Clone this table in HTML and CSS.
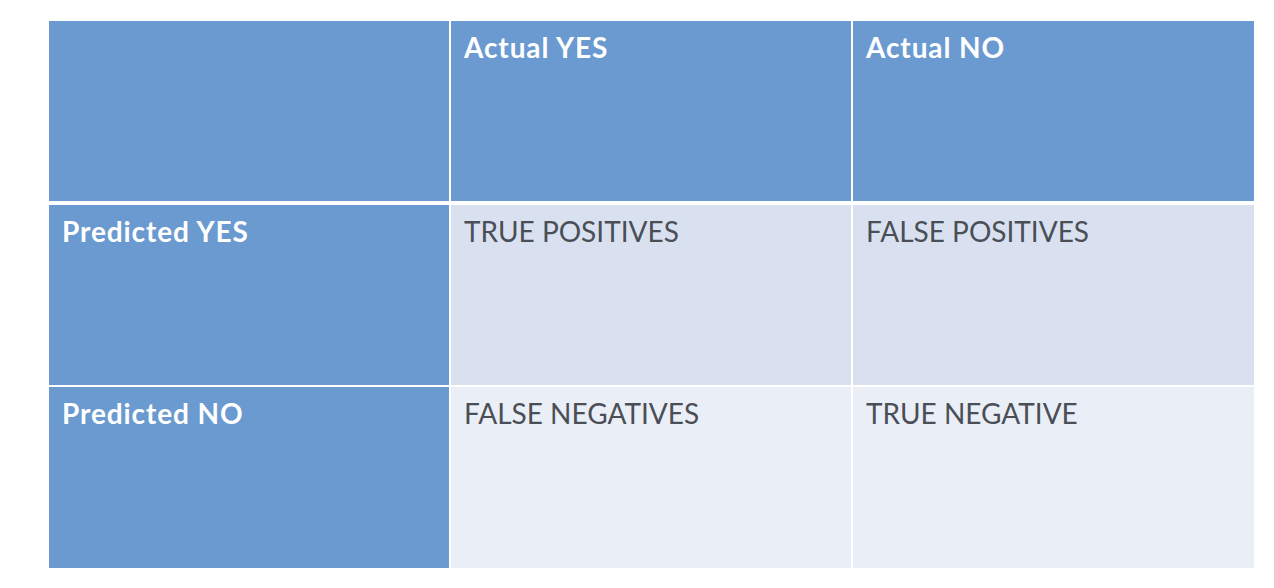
FILE: index.html
```html
<!DOCTYPE html>
<html>
<head>
<meta charset="utf-8">
<link rel="stylesheet" href="styles.css">
</head>
<body>
<div class="matrix">
  <div class="cell head"></div>
  <div class="cell head">Actual YES</div>
  <div class="cell head">Actual NO</div>
  <div class="cell side">Predicted YES</div>
  <div class="cell odd">TRUE POSITIVES</div>
  <div class="cell odd">FALSE POSITIVES</div>
  <div class="cell side">Predicted NO</div>
  <div class="cell even">FALSE NEGATIVES</div>
  <div class="cell even">TRUE NEGATIVE</div>
</div>
</body>
</html>
```
FILE: styles.css
```css
html, body {
  margin: 0;
  padding: 0;
  background: #ffffff;
}
body {
  padding: 21px 0 0 49px;
  font-family: Lato, "Open Sans", sans-serif;
}
.matrix {
  display: grid;
  grid-template-columns: 400px 400px 401px;
  grid-template-rows: 182px 180px 181px;
  column-gap: 2px;
  row-gap: 2px;
  width: 1205px;
}
.cell {
  padding: 9px 13px 0 13px;
  font-size: 28px;
  line-height: 34px;
  box-sizing: border-box;
}
.head {
  background: #6a9ad0;
  border-bottom: 2px solid #ffffff;
  color: #ffffff;
  font-weight: 700;
  letter-spacing: 0.9px;
}
.side {
  background: #6a9ad0;
  color: #ffffff;
  font-weight: 700;
  letter-spacing: 0.9px;
}
.odd {
  background: #d9e1f0;
  color: #4a4e56;
}
.even {
  background: #eaeef7;
  color: #4a4e56;
}
```
